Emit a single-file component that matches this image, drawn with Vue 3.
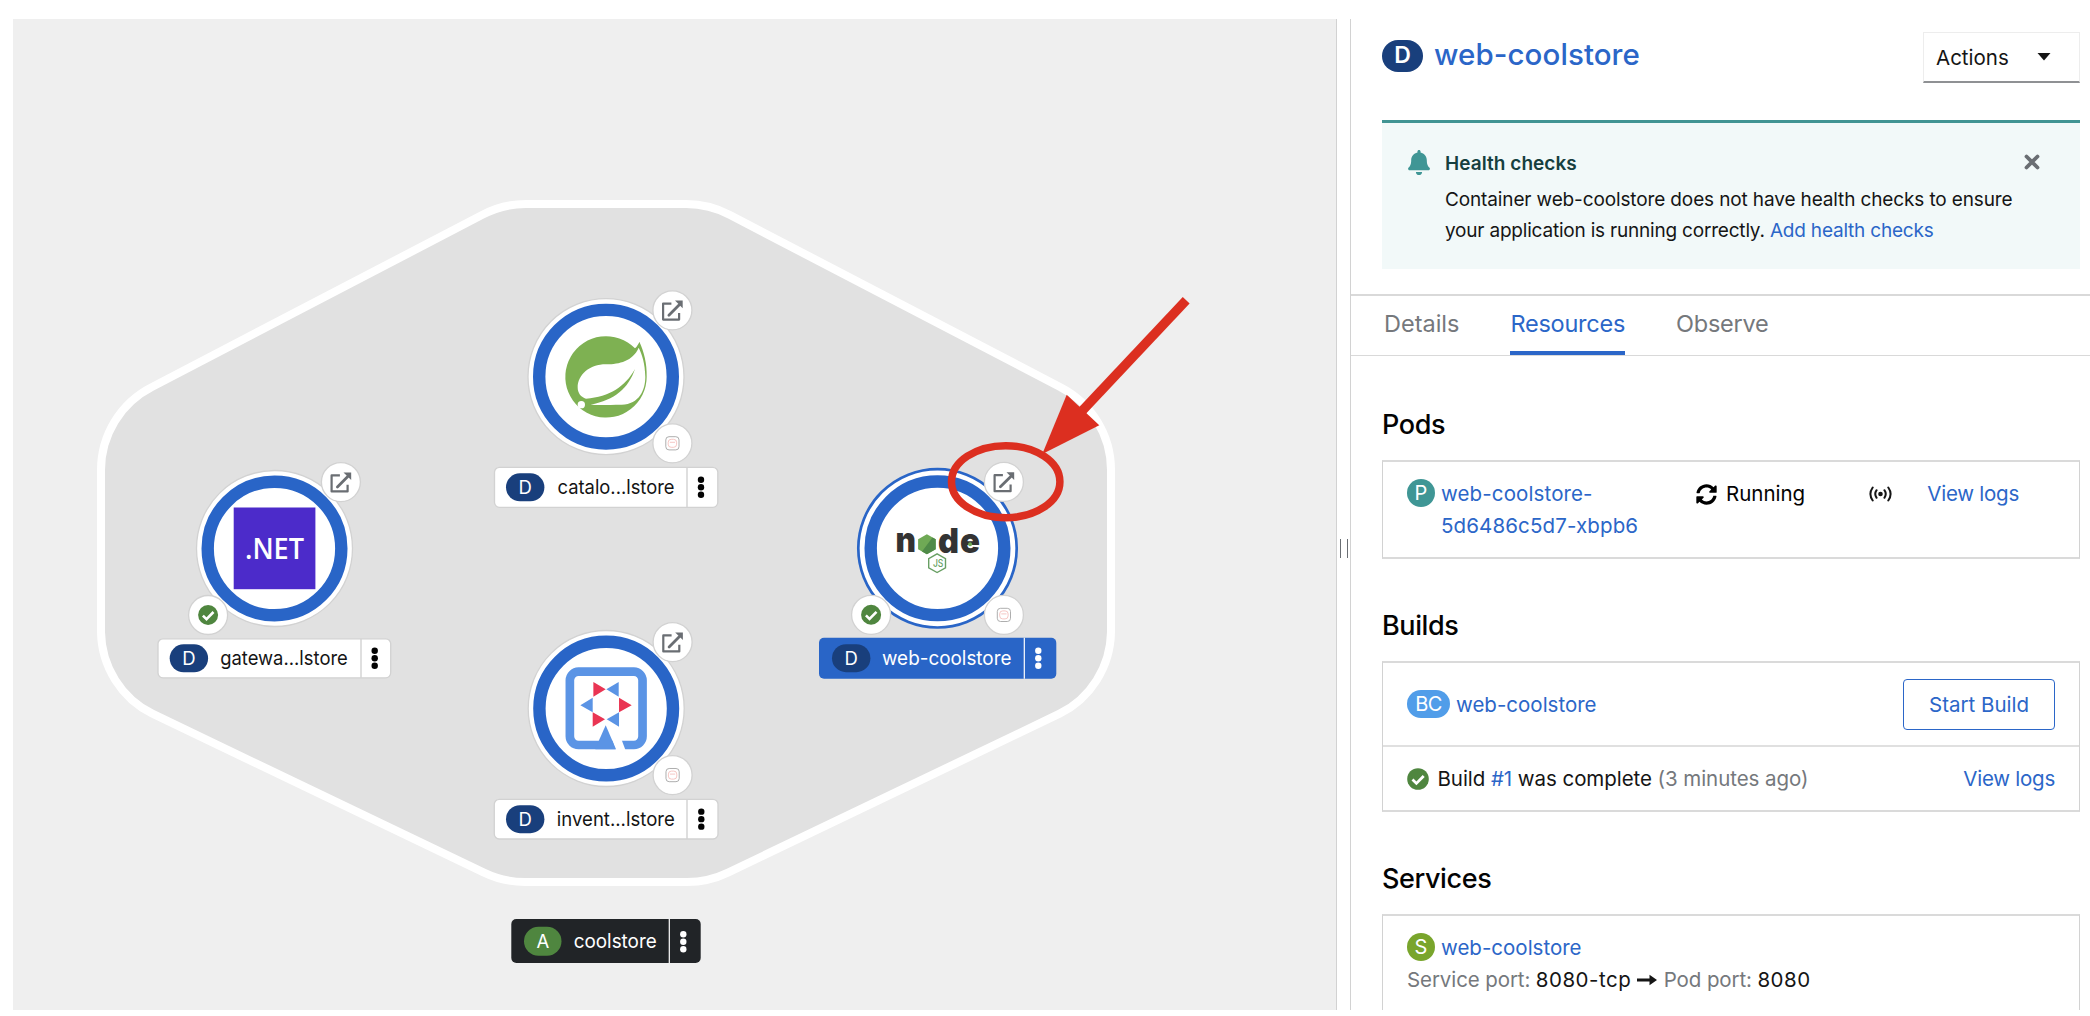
<script setup>
const nodes = [
  {
    id: 'catalog', x: 606, y: 376.7, name: 'catalo...lstore', icon: 'spring', route: true, editor: true,
    label: { x: 494.5, y: 467.3, w: 223.3, h: 40, badge: 506, text: 557.5, textWidth: 117, divider: 687, kebab: 701 },
  },
  {
    id: 'gateway', x: 274.5, y: 548.5, name: 'gatewa...lstore', icon: 'dotnet', route: true, built: true,
    label: { x: 158, y: 638.8, w: 232.7, h: 39, badge: 169.7, text: 220.2, textWidth: 127.6, divider: 361, kebab: 374.7 },
  },
  {
    id: 'web', x: 937.5, y: 548.3, name: 'web-coolstore', icon: 'node', route: true, built: true, editor: true, selected: true,
    label: { x: 819, y: 637.7, w: 237.3, h: 41, badge: 832, text: 882, textWidth: 129.5, divider: 1024.3, kebab: 1038.3 },
  },
  {
    id: 'inventory', x: 606.2, y: 708.5, name: 'invent...lstore', icon: 'quarkus', route: true, editor: true,
    label: { x: 494.3, y: 799.3, w: 223.7, h: 39.7, badge: 506, text: 556.8, textWidth: 118, divider: 687, kebab: 701.3 },
  },
]
const tabs = ['Details', 'Resources', 'Observe']
const activeTab = 'Resources'
</script>

<template>
  <div class="page">
    <main class="topology">
      <svg class="graph" viewBox="13 19 1324 991" width="1324" height="991">
        <path
          class="group"
          d="M527 204H685A93 93 0 0 1 730 215L1060 387A93 93 0 0 1 1111 470V632A93 93 0 0 1 1059.6 713.7L728 872.6A95 95 0 0 1 687 882H525A95 95 0 0 1 484 872.6L152.4 713.7A93 93 0 0 1 101 632V470A93 93 0 0 1 152 387L482 215A93 93 0 0 1 527 204Z"
        />

        <g v-for="n in nodes" :key="n.id">
          <g :transform="`translate(${n.x} ${n.y})`">
            <circle v-if="n.selected" r="79.2" class="halo" />
            <circle v-else r="78" class="rim" />
            <circle r="66.8" class="ring" />

            <g v-if="n.icon === 'spring'" transform="scale(.33333) translate(-318 -290)">
              <path fill="#7eb152" d="M418 185C432 215 441 250 440 290A122 122 0 1 1 405 205C411 199 415 193 418 185Z" />
              <path fill="#fff" d="M416 203C398 244 358 252 320 253C270 252 233 284 233 322C233 340 243 352 258 356C330 350 375 320 405 267C385 325 345 360 272 374C300 376 330 374 365 374C418 372 436 330 436 290C435 250 427 225 416 203Z" />
              <circle cx="244" cy="374" r="11" fill="#fff" />
            </g>

            <g v-else-if="n.icon === 'dotnet'">
              <rect x="-40.8" y="-41" width="81.7" height="81.7" fill="#4c2bca" />
              <text x="-29.5" y="10.8" class="dotnet" textLength="59" lengthAdjust="spacingAndGlyphs">.NET</text>
            </g>

            <g v-else-if="n.icon === 'quarkus'" transform="scale(.33333) translate(-378.5 -295.5)">
              <rect x="269.5" y="185" width="218" height="220" rx="26" fill="#fff" stroke="#5b94e5" stroke-width="26" />
              <path fill="#fff" d="M395 385H423L437 422H407Z" />
              <path fill="#5b94e5" d="M377 346L408 418H346L357 391Z" />
              <path fill="#5b94e5" d="M416 216V260L379 238ZM338 263V307L301 286ZM417 307V350L380 328Z" />
              <path fill="#ea3553" d="M340 216V260L377 238ZM417 263V307L455 286ZM338 307V350L375 328Z" />
            </g>

            <g v-else>
              <text x="-42" y="4" class="nodejs" textLength="20.5" lengthAdjust="spacingAndGlyphs">n</text>
              <path fill="#6fa955" d="M-10.6 -14L-1.8 -9V1L-10.6 6L-19.4 1V-9Z" />
              <path fill="#4f8a48" d="M-5 -10.8L-1.8 -9V1L-10.6 6L-15.5 3.2Z" />
              <text x="0.6" y="5" class="nodejs" textLength="21" lengthAdjust="spacingAndGlyphs">d</text>
              <text x="22.4" y="5" class="nodejs" textLength="20" lengthAdjust="spacingAndGlyphs">e</text>
              <circle cx="32.6" cy="-4" r="2" fill="#6fa955" />
              <path class="hex" d="M-0.4 5.6L8 10.3V19.5L-0.4 24.2L-8.8 19.5V10.3Z" />
              <text x="-4.6" y="19" class="js" textLength="10.5" lengthAdjust="spacingAndGlyphs">JS</text>
            </g>
          </g>

          <g v-if="n.route" :transform="`translate(${n.x + 66.4} ${n.y - 66.4})`">
            <circle r="19.5" class="rim" />
            <path class="link-frame" d="M-1 -6.7H-9.3V9.3H6.7V2.7" />
            <path class="link-arrow" d="M-3.5 4.9L6.9 -5.5" />
            <path fill="#6a6e73" d="M2.6 -9.7H10.3V-2Z" />
          </g>
          <g v-if="n.built" :transform="`translate(${n.x - 66.4} ${n.y + 66.5})`">
            <circle r="19.5" class="rim" />
            <circle r="10" fill="#4f863f" />
            <path class="tick" d="M-5.2 .6L-1.6 4.1L5.4 -3" />
          </g>
          <g v-if="n.editor" :transform="`translate(${n.x + 66.4} ${n.y + 66.6})`">
            <circle r="19.5" class="rim" />
            <rect x="-6.6" y="-6.6" width="13.2" height="13.2" rx="3.2" class="editor-frame" />
            <rect x="-4.2" y="-4" width="8.4" height="8" rx="3" class="editor-face" />
            <path class="editor-face" d="M-2.6 -1H2.6" />
          </g>

          <g>
            <rect :x="n.label.x" :y="n.label.y" :width="n.label.w" :height="n.label.h" rx="5" :class="['label', { active: n.selected }]" />
            <path :class="['divider', { active: n.selected }]" :d="`M${n.label.divider} ${n.label.y}v${n.label.h}`" />
            <rect :x="n.label.badge" :y="n.label.y + n.label.h / 2 - 14" width="38.4" height="28" rx="14" fill="#193f7c" />
            <text :x="n.label.badge + 19.2" :y="n.label.y + n.label.h / 2 + 6.4" class="badge-letter">D</text>
            <text :x="n.label.text" :y="n.label.y + n.label.h / 2 + 7" :class="['name', { active: n.selected }]" :textLength="n.label.textWidth" lengthAdjust="spacingAndGlyphs">{{ n.name }}</text>
            <g :transform="`translate(${n.label.kebab} ${n.label.y + n.label.h / 2})`" :fill="n.selected ? '#fff' : '#030303'">
              <circle cy="-7.5" r="3.2" /><circle r="3.2" /><circle cy="7.5" r="3.2" />
            </g>
          </g>
        </g>

        <g>
          <rect x="511.3" y="919" width="189.4" height="44" rx="5" fill="#212427" />
          <path class="divider active" d="M669.3 919v44" />
          <rect x="524" y="926.7" width="37.5" height="29" rx="14.5" fill="#4f863f" />
          <text x="542.8" y="948" class="badge-letter">A</text>
          <text x="573.7" y="948.2" class="name active" textLength="83" lengthAdjust="spacingAndGlyphs">coolstore</text>
          <g transform="translate(683.3 941.7)" fill="#fff">
            <circle cy="-7.5" r="3.2" /><circle r="3.2" /><circle cy="7.5" r="3.2" />
          </g>
        </g>

        <ellipse class="callout" cx="1005.7" cy="481.7" rx="54.2" ry="36" />
        <path class="pointer" d="M1186.2 300.2L1082 411" />
        <path fill="#dc2f20" d="M1042.3 454L1066.7 394.7L1099.3 425.3Z" />
      </svg>
    </main>

    <div class="splitter"><i></i><i></i></div>

    <aside class="drawer">
      <header class="head">
        <span class="kind kind-lg navy">D</span>
        <h1>web-coolstore</h1>
        <button class="actions"><span>Actions</span>
          <svg width="14" height="8" viewBox="0 0 14 8"><path d="M.5 0H13.5L7 7.6Z" fill="#151515" /></svg>
        </button>
      </header>

      <section class="alert">
        <svg class="bell" width="22" height="25" viewBox="0 0 448 512"><path fill="#3f9695" d="M224 512c35.3 0 63.900-28.600 63.900-64H160.100c0 35.400 28.600 64 63.900 64zm215.400-149.700c-19.300-20.800-55.500-52-55.500-154.300 0-77.700-54.500-139.900-127.900-155.200V32c0-17.700-14.300-32-32-32s-32 14.300-32 32v20.800C118.600 68.100 64.100 130.300 64.100 208c0 102.300-36.200 133.500-55.500 154.300-6 6.400-8.700 14.100-8.600 21.700.1 16.400 13 32 32.100 32h383.800c19.100 0 32-15.600 32.100-32 .1-7.600-2.600-15.300-8.600-21.700z" /></svg>
        <div class="alert-body">
          <h2>Health checks</h2>
          <p class="l1">Container web-coolstore does not have health checks to ensure</p>
          <p class="l2">your application is running correctly. <a>Add health checks</a></p>
        </div>
        <svg class="close" width="16" height="16" viewBox="0 0 16 16"><path d="M2.500 2.500L13.500 13.500M13.500 2.500L2.500 13.500" stroke="#6a6e73" stroke-width="3.800" stroke-linecap="round" /></svg>
      </section>

      <nav class="tabs">
        <a v-for="t in tabs" :key="t" :class="{ current: t === activeTab }">{{ t }}</a>
      </nav>

      <section class="block">
        <h3>Pods</h3>
        <div class="card pods">
          <div class="pod-name">
            <span class="kind teal">P</span>
            <a>web-coolstore-<br />5d6486c5d7-xbpb6</a>
          </div>
          <div class="pod-status">
            <svg width="21" height="21" viewBox="0 0 512 512"><path d="M370.720 133.280C339.458 104.008 298.888 87.962 255.848 88c-77.458.068-144.328 53.178-162.791 126.850-1.344 5.363-6.122 9.150-11.651 9.150H24.103c-7.498 0-13.194-6.807-11.807-14.176C33.933 94.924 134.813 8 256 8c66.448 0 126.791 26.136 171.315 68.685L463.030 40.970C478.149 25.851 504 36.559 504 57.941V192c0 13.255-10.745 24-24 24H345.941c-21.382 0-32.090-25.851-16.971-40.971l41.750-41.749zM32 296h134.059c21.382 0 32.090 25.851 16.971 40.971l-41.750 41.750c31.262 29.273 71.835 45.319 114.876 45.280 77.418-.07 144.315-53.144 162.787-126.849 1.344-5.363 6.122-9.150 11.651-9.150h57.304c7.498 0 13.194 6.807 11.807 14.176C478.067 417.076 377.187 504 256 504c-66.448 0-126.791-26.136-171.315-68.685L48.970 471.030C33.851 486.149 8 475.441 8 454.059V320c0-13.255 10.745-24 24-24z" /></svg>
            <span>Running</span>
          </div>
          <svg class="signal" width="23" height="16" viewBox="0 0 23 16" fill="none" stroke="#151515" stroke-width="2" stroke-linecap="round">
            <circle cx="11.500" cy="8" r="2.300" fill="#151515" stroke="none" />
            <path d="M7.600 4.200Q4.900 8 7.600 11.800M15.400 4.200Q18.100 8 15.400 11.800M3.700 1.500Q-.900 8 3.700 14.500M19.300 1.500Q23.900 8 19.300 14.500" />
          </svg>
          <a class="pod-logs">View logs</a>
        </div>
      </section>

      <section class="block">
        <h3>Builds</h3>
        <div class="card">
          <div class="row build-config">
            <span class="kind sky">BC</span>
            <a>web-coolstore</a>
            <button class="start">Start Build</button>
          </div>
          <div class="row build">
            <svg width="22" height="22" viewBox="0 0 22 22"><circle cx="11" cy="11" r="10.800" fill="#4f863f" /><path d="M5.500 11.600L9.400 15.400L16.700 8" fill="none" stroke="#fff" stroke-width="2.800" /></svg>
            <p>Build <a>#1</a> was complete <small>(3 minutes ago)</small></p>
            <a class="logs">View logs</a>
          </div>
        </div>
      </section>

      <section class="block">
        <h3>Services</h3>
        <div class="card services">
          <div class="service-name"><span class="kind green">S</span><a>web-coolstore</a></div>
          <div class="ports">
            <small>Service port:</small><span>8080-tcp</span>
            <svg width="20" height="12" viewBox="0 0 20 12"><path d="M0 4.500H12.500V.8L20 6L12.500 11.200V7.500H0Z" fill="#151515" /></svg>
            <small>Pod port:</small><span>8080</span>
          </div>
        </div>
      </section>
    </aside>
  </div>
</template>

<style>
body { background: #fff; overflow: hidden; }
</style>

<style scoped>
.page {
  box-sizing: border-box;
  display: flex;
  width: 2090px;
  height: 1016px;
  padding: 19px 0 6px 13px;
  font-family: Inter, "Liberation Sans", sans-serif;
  font-size: 20.5px;
  color: #151515;
}
h1, h2, h3, p { margin: 0; font-weight: 400; }
button { font: inherit; color: inherit; background: #fff; padding: 0; }
a { color: #2b66c8; }
small { font-size: inherit; color: #75787c; }

.topology { width: 1324px; height: 991px; background: #efefef; flex: none; }
.graph { display: block; }
.group { fill: #e1e1e1; stroke: #fff; stroke-width: 8; }
.rim { fill: #fff; stroke: #d2d2d2; stroke-width: 1.3; }
.halo { fill: #fff; stroke: #2965c7; stroke-width: 2.7; }
.ring { fill: #fff; stroke: #2965c7; stroke-width: 12.4; }
.link-frame { fill: none; stroke: #6a6e73; stroke-width: 2.2; stroke-linejoin: round; }
.link-arrow { stroke: #6a6e73; stroke-width: 2.8; stroke-linecap: round; }
.tick { fill: none; stroke: #fff; stroke-width: 2.6; }
.editor-frame { fill: none; stroke: #a5a5a5; stroke-width: .9; }
.editor-face { fill: none; stroke: #f3b9b5; stroke-width: .8; }
.label { fill: #fff; stroke: #d2d2d2; stroke-width: 1.3; }
.label.active { fill: #2965c7; stroke: none; }
.divider { stroke: #d2d2d2; stroke-width: 1.4; }
.divider.active { stroke: #fff; stroke-width: 1.2; }
.badge-letter { fill: #fff; font-size: 18.5px; text-anchor: middle; }
.name { fill: #151515; font-size: 19.6px; }
.name.active { fill: #fff; }
.dotnet { fill: #fff; font: 600 29.4px "Open Sans", sans-serif; }
.nodejs { fill: #333; font: 900 34px Inter, sans-serif; }
.hex { fill: none; stroke: #689f63; stroke-width: 1.4; }
.js { fill: #689f63; font: 500 11px Inter, sans-serif; }
.callout { fill: none; stroke: #dc2f20; stroke-width: 7.5; }
.pointer { stroke: #dc2f20; stroke-width: 9.4; }

.splitter {
  flex: none;
  display: flex;
  align-items: center;
  justify-content: center;
  gap: 6px;
  box-sizing: border-box;
  width: 15px;
  height: 991px;
  margin-left: -1px;
  border: solid #d2d2d2;
  border-width: 0 1px;
}
.splitter i { width: 1px; height: 19px; margin-top: 67px; background: #6a6e73; }

.drawer { flex: 1; height: 991px; overflow: hidden; }
.head { display: flex; align-items: flex-start; height: 101px; padding: 0 10px 0 31px; box-sizing: border-box; }
.kind {
  flex: none;
  box-sizing: border-box;
  min-width: 28px;
  height: 28px;
  line-height: 28px;
  border-radius: 14px;
  text-align: center;
  color: #fff;
  font-size: 20px;
}
.kind-lg { width: 41px; height: 32px; line-height: 31px; border-radius: 16px; margin-top: 21px; font-size: 23px; font-weight: 600; }
.navy { background: #193f7c; }
.teal { background: #3f9695; }
.sky { background: #519de9; width: 43px; letter-spacing: -.5px; }
.green { background: #79a52c; }
h1 { margin: 20px 0 0 11px; font-size: 29.5px; line-height: 31px; font-weight: 500; letter-spacing: .08px; color: #2b66c8; }
.actions {
  display: flex;
  align-items: center;
  box-sizing: border-box;
  width: 157px;
  height: 51px;
  margin: 13px 0 0 auto;
  padding: 0 28px 0 12px;
  border: 1px solid #ededed;
  border-bottom: 2px solid #8f9194;
}
.actions span { margin-top: 1px; }
.actions svg { margin-left: auto; }

.alert {
  display: flex;
  align-items: flex-start;
  box-sizing: border-box;
  height: 149px;
  margin: 0 10px 0 31px;
  padding: 26px 40px 0 26px;
  border-top: 3px solid #419493;
  background: #f2f9f9;
}
.bell { flex: none; margin-top: 1px; }
.alert-body { margin-left: 15px; flex: 1; white-space: nowrap; font-size: 19px; line-height: 30.5px; }
.alert-body h2 { font-size: 19px; line-height: 30px; font-weight: 600; color: #163f3f; letter-spacing: .05px; }
.alert-body .l1 { margin-top: 6px; letter-spacing: -.13px; }
.alert-body .l2 { letter-spacing: -.2px; }
.close { flex: none; margin-top: 5px; }

.tabs {
  display: flex;
  gap: 51px;
  box-sizing: border-box;
  height: 62px;
  margin-top: 25px;
  padding-left: 33px;
  border: solid #d9d9d9;
  border-width: 2px 0 1px;
  font-size: 23.5px;
  letter-spacing: -.25px;
}
.tabs a { box-sizing: border-box; height: 59px; line-height: 56px; color: #75787c; border-bottom: 4px solid transparent; }
.tabs a:first-child { letter-spacing: 0; }
.tabs a.current { color: #2b66c8; border-color: #2b66c8; }

.block { margin: 50px 10px 0 31px; }
.tabs + .block { margin-top: 52px; }
h3 { font-size: 27px; line-height: 34px; height: 32px; font-weight: 500; letter-spacing: -.4px; color: #030303; }
.card { box-sizing: border-box; margin-top: 20px; border: solid; border-width: 2px 1px; border-color: #dadada #d2d2d2; }

.pods { display: flex; align-items: flex-start; height: 99px; padding: 16px 60px 0 24px; line-height: 32px; }
.pod-name { display: flex; width: 289px; }
.pod-name a { margin-left: 6px; letter-spacing: .12px; }
.pod-status { display: flex; align-items: center; width: 173px; color: #030303; }
.pod-status span { margin-left: 9px; }
.pod-status svg { flex: none; }
.signal { margin-top: 8px; }
.pod-logs { margin-left: auto; letter-spacing: -.25px; }
.pods .kind { margin-top: 1px; }

.row { display: flex; align-items: center; box-sizing: border-box; padding: 0 24px; }
.build-config { height: 84px; border-bottom: 2px solid #e0e0e0; }
.build-config a { margin-left: 6px; }
.start { box-sizing: border-box; width: 152px; height: 51px; margin-left: auto; border: 1.5px solid #2b66c8; border-radius: 4px; color: #2b66c8; }
.build { height: 63px; }
.build p { margin-left: 8.5px; letter-spacing: -.06px; }
.logs { margin-left: auto; letter-spacing: -.25px; }

.services { height: 140px; padding: 16px 24px; }
.service-name { display: flex; line-height: 32px; height: 31px; }
.service-name .kind { margin-top: 1px; }
.service-name a { margin-left: 6px; }
.ports { display: flex; align-items: center; line-height: 33px; }
.ports small { letter-spacing: -.1px; }
.ports span { margin-left: 5.5px; letter-spacing: .5px; }
.ports svg { margin: 0 6.5px 0 6px; }
</style>
